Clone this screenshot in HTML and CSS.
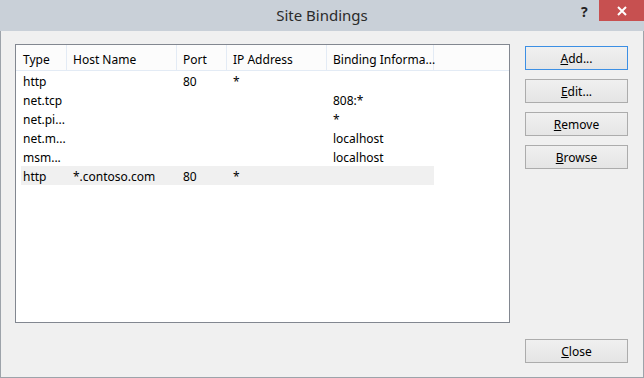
FILE: index.html
```html
<!DOCTYPE html>
<html lang="en">

<head>
    <meta charset="UTF-8">
    <title>Site Bindings</title>
    <link rel="stylesheet" href="styles.css">
</head>

<body>

    <div class="window">
        <!-- Title bar -->
        <div class="titlebar">
            <span class="title">Site Bindings</span>
            <span class="help">?</span>
            <span class="close-x">
                <svg width="10" height="10" viewBox="0 0 10 10">
                    <path d="M1 1 L9 9 M9 1 L1 9" stroke="#fff" stroke-width="2"/>
                </svg>
            </span>
        </div>

        <div class="content">
            <!-- Bindings list -->
            <div class="list">
                <div class="list-header">
                    <div class="col">Type</div>
                    <div class="col">Host Name</div>
                    <div class="col">Port</div>
                    <div class="col">IP Address</div>
                    <div class="col">Binding Informa...</div>
                    <div class="col filler"></div>
                </div>
                <div class="row">
                    <div class="cell">http</div>
                    <div class="cell"></div>
                    <div class="cell">80</div>
                    <div class="cell">*</div>
                    <div class="cell"></div>
                </div>
                <div class="row">
                    <div class="cell">net.tcp</div>
                    <div class="cell"></div>
                    <div class="cell"></div>
                    <div class="cell"></div>
                    <div class="cell">808:*</div>
                </div>
                <div class="row">
                    <div class="cell">net.pi...</div>
                    <div class="cell"></div>
                    <div class="cell"></div>
                    <div class="cell"></div>
                    <div class="cell">*</div>
                </div>
                <div class="row">
                    <div class="cell">net.m...</div>
                    <div class="cell"></div>
                    <div class="cell"></div>
                    <div class="cell"></div>
                    <div class="cell">localhost</div>
                </div>
                <div class="row">
                    <div class="cell">msm...</div>
                    <div class="cell"></div>
                    <div class="cell"></div>
                    <div class="cell"></div>
                    <div class="cell">localhost</div>
                </div>
                <div class="row selected">
                    <div class="cell">http</div>
                    <div class="cell">*.contoso.com</div>
                    <div class="cell">80</div>
                    <div class="cell">*</div>
                    <div class="cell"></div>
                </div>
            </div>

            <!-- Buttons -->
            <div class="buttons">
                <button class="btn focused"><u>A</u>dd...</button>
                <button class="btn"><u>E</u>dit...</button>
                <button class="btn"><u>R</u>emove</button>
                <button class="btn"><u>B</u>rowse</button>
                <button class="btn close-btn"><u>C</u>lose</button>
            </div>
        </div>
    </div>

</body>

</html>
```

FILE: styles.css
```css
html, body {
    margin: 0;
    padding: 0;
    overflow: hidden;
    height: 100%;
}

body {
    font-family: "Noto Sans", "Open Sans", sans-serif;
    font-size: 12px;
    color: #000;
}

.window {
    box-sizing: border-box;
    width: 644px;
    height: 378px;
    display: flex;
    flex-direction: column;
    border: 1px solid #9da3aa;
    border-top: none;
    background-color: #f0f0f0;
}

/* Title bar */
.titlebar {
    position: relative;
    height: 31px;
    flex-shrink: 0;
    margin: 0 -1px;
    background-color: #c9d0d8;
}

.title {
    position: absolute;
    left: 0;
    right: 0;
    top: 5px;
    text-align: center;
    font-size: 15px;
    color: #2b2b2b;
}

.help {
    position: absolute;
    top: 2px;
    left: 581px;
    font-size: 14px;
    font-weight: bold;
    color: #222;
}

.close-x {
    position: absolute;
    top: 0;
    right: 0;
    width: 45px;
    height: 21px;
    background-color: #c75050;
    display: flex;
    align-items: center;
    justify-content: center;
}

/* Content */
.content {
    flex: 1;
    display: flex;
    gap: 15px;
    padding: 13px 15px 14px 14px;
}

.list {
    box-sizing: border-box;
    width: 496px;
    height: 279px;
    border: 1px solid #828790;
    background-color: #fff;
}

.list-header {
    display: flex;
    height: 25px;
    background-color: #fcfcfc;
    border-bottom: 1px solid #e3ebf5;
}

.list-header .col {
    box-sizing: border-box;
    padding: 6px 0 0 6px;
    border-right: 1px solid #e3ebf5;
    white-space: nowrap;
}

.list-header .col:nth-child(1) { width: 51px; padding-left: 7px; }
.list-header .col:nth-child(2) { width: 110px; }
.list-header .col:nth-child(3) { width: 50px; }
.list-header .col:nth-child(4) { width: 100px; }
.list-header .col:nth-child(5) { width: 107px; }
.list-header .col.filler { flex: 1; border-right: none; }

.row {
    box-sizing: border-box;
    display: flex;
    height: 19px;
    width: 413px;
    margin-left: 5px;
    padding-top: 2px;
    align-items: center;
}

.row.selected {
    background-color: #f0f0f0;
}

.cell {
    box-sizing: border-box;
    padding-left: 6px;
    white-space: nowrap;
}

.cell:nth-child(1) { width: 46px; padding-left: 2px; }
.cell:nth-child(2) { width: 110px; }
.cell:nth-child(3) { width: 50px; }
.cell:nth-child(4) { width: 100px; }
.cell:nth-child(5) { width: 107px; }

/* Buttons */
.buttons {
    display: flex;
    flex-direction: column;
    gap: 9px;
    padding-top: 2px;
}

.btn {
    box-sizing: border-box;
    width: 103px;
    height: 24px;
    padding: 0;
    font-family: inherit;
    font-size: 12px;
    color: #000;
    border: 1px solid #acacac;
    background: linear-gradient(#f0f0f0, #e5e5e5);
}

.btn.focused {
    border-color: #3c8fe4;
}

.close-btn {
    margin-top: auto;
}
```
